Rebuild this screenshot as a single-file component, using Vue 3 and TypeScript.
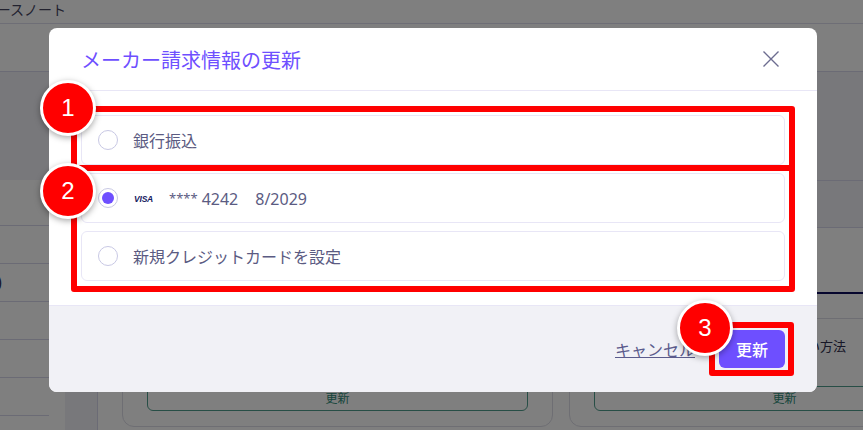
<script setup lang="ts">
import { ref } from 'vue';

interface PayOption {
  id: string;
  label?: string;
  card?: { number: string; last4: string; expiry: string };
}

const options: PayOption[] = [
  { id: 'bank', label: '銀行振込' },
  { id: 'visa', card: { number: '****', last4: '4242', expiry: '8/2029' } },
  { id: 'new', label: '新規クレジットカードを設定' },
];

const selected = ref('visa');
const sideRows = ['', ')', '', '', ''];
</script>

<template>
  <div class="page">
    <div class="topbar">
      <span class="topbar-title">リリースノート</span>
    </div>
    <div class="band"></div>
    <div class="content">
      <aside class="side">
        <div class="side-head"></div>
        <div class="side-row side-first"></div>
        <div v-for="(row, i) in sideRows" :key="i" class="side-row">
          <span class="side-text">{{ row }}</span>
        </div>
      </aside>
      <div class="rail"></div>
      <main class="main">
        <div class="main-head"></div>
        <div class="main-sub"></div>
        <div class="main-tabs"></div>
        <div class="cards">
          <section class="card">
            <div class="card-label"></div>
            <div class="card-btn">更新</div>
          </section>
          <section class="card">
            <div class="card-label">お支払い方法</div>
            <div class="card-btn">更新</div>
          </section>
        </div>
      </main>
    </div>

    <div class="overlay">
      <div class="modal">
        <header class="modal-header">
          <h2 class="modal-title">メーカー請求情報の更新</h2>
          <svg class="close" width="16" height="16" viewBox="0 0 16 16" fill="none">
            <path d="M0.5 0.5L15.5 15.5M15.5 0.5L0.5 15.5" stroke="#6c6c90" stroke-width="1.4" />
          </svg>
        </header>
        <div class="modal-body">
          <div
            v-for="opt in options"
            :key="opt.id"
            class="option"
            @click="selected = opt.id"
          >
            <span class="radio" :class="{ checked: selected === opt.id }"></span>
            <span v-if="opt.label" class="option-text">{{ opt.label }}</span>
            <span v-else-if="opt.card" class="option-card">
              <span class="visa">VISA</span>
              <span class="stars">{{ opt.card.number }}</span>
              <span>{{ opt.card.last4 }}</span>
              <span class="expiry">{{ opt.card.expiry }}</span>
            </span>
          </div>
        </div>
        <footer class="modal-footer">
          <a class="cancel">キャンセル</a>
          <button class="submit" type="button">更新</button>
        </footer>
      </div>
    </div>

    <div class="frame frame-1"></div>
    <div class="frame frame-2"></div>
    <div class="frame frame-3"></div>
    <div class="bubble bubble-1">1</div>
    <div class="bubble bubble-2">2</div>
    <div class="bubble bubble-3">3</div>
  </div>
</template>

<style>
html,
body {
  margin: 0;
  overflow: hidden;
}
</style>

<style scoped>
.page {
  position: relative;
  width: 863px;
  height: 430px;
  overflow: hidden;
  background: #fff;
  color: #2f2f4f;
  font-family: "Noto Sans", "Noto Sans CJK JP", sans-serif;
}

.topbar {
  height: 24px;
  box-sizing: border-box;
  border-bottom: 1px solid #dcdcec;
}

.topbar-title {
  display: flex;
  justify-content: flex-end;
  width: 66px;
  font-size: 14px;
  line-height: 19px;
  white-space: nowrap;
  color: #44445f;
}

.band {
  height: 48px;
  box-sizing: border-box;
  border-bottom: 1px solid #d6d6ea;
}

.content {
  display: flex;
  height: 358px;
}

.side {
  width: 65px;
  flex: none;
}

.side-head {
  height: 108px;
  box-sizing: border-box;
  background: #f1f1f6;
}

.side-row {
  width: 49px;
  height: 38px;
  box-sizing: border-box;
  border-bottom: 1px solid #d6d6ea;
  font-size: 16px;
  line-height: 37px;
}

.side-first {
  height: 46px;
}

.side-text {
  display: block;
  margin-left: -3px;
}

.rail {
  width: 33px;
  flex: none;
  box-sizing: border-box;
  background: #f1f1f6;
  border-right: 1px solid #d6d6ea;
}

.main {
  flex: 1;
  min-width: 0;
}

.main-head {
  height: 109px;
  box-sizing: border-box;
  background: #f1f1f6;
  border-bottom: 1px solid #d6d6ea;
}

.main-sub {
  height: 47px;
  box-sizing: border-box;
  background: #f1f1f6;
  border-bottom: 1px solid #d6d6ea;
}

.main-tabs {
  height: 66px;
  box-sizing: border-box;
  border-bottom: 2px solid #0c0c5c;
}

.cards {
  display: flex;
  gap: 16px;
  padding: 24px 0 0 24px;
  width: 1000px;
}

.card {
  width: 431px;
  height: 109px;
  flex: none;
  box-sizing: border-box;
  padding: 17px 24px;
  border: 1px solid #dcdce6;
  border-radius: 12px;
}

.card-label {
  width: 252px;
  height: 20px;
  margin-bottom: 30px;
  font-size: 13px;
  line-height: 20px;
  text-align: right;
}

.card-btn {
  height: 25px;
  box-sizing: border-box;
  border: 1px solid #4f9c8c;
  border-radius: 6px;
  font-size: 12px;
  line-height: 23px;
  text-align: center;
  color: #2f8c78;
}

.overlay {
  position: absolute;
  inset: 0;
  display: flex;
  align-items: flex-start;
  padding: 28px 0 0 49px;
  background: rgba(0, 0, 0, 0.5);
}

.modal {
  width: 768px;
  background: #fff;
  border-radius: 8px;
  overflow: hidden;
}

.modal-header {
  display: flex;
  align-items: center;
  justify-content: space-between;
  height: 63px;
  box-sizing: border-box;
  padding: 0 38px 0 32px;
  border-bottom: 1px solid #e8e6f6;
}

.modal-title {
  margin: 0;
  font-size: 20px;
  font-weight: 400;
  color: #6e4fff;
}

.close {
  flex: none;
}

.modal-body {
  display: flex;
  flex-direction: column;
  gap: 8px;
  padding: 24px 32px;
}

.option {
  display: flex;
  align-items: center;
  gap: 15px;
  height: 50px;
  box-sizing: border-box;
  padding: 0 16px;
  border: 1px solid #e8e6f6;
  border-radius: 6px;
  color: #5b5b82;
  font-size: 16px;
}

.radio {
  position: relative;
  width: 20px;
  height: 20px;
  flex: none;
  box-sizing: border-box;
  border: 1px solid #c8c8e4;
  border-radius: 50%;
}

.radio.checked::after {
  content: "";
  position: absolute;
  inset: 3px;
  border-radius: 50%;
  background: #6e4fff;
}

.option-card {
  display: flex;
  align-items: center;
  margin-top: 1px;
}

.visa {
  width: 36px;
  padding-left: 1px;
  box-sizing: border-box;
  font-family: "Liberation Sans", sans-serif;
  font-size: 8.5px;
  font-style: italic;
  font-weight: 700;
  letter-spacing: -0.2px;
  color: #16205f;
}

.stars {
  margin-right: 4px;
  margin-bottom: 2px;
  font-size: 13px;
}

.expiry {
  margin-left: 17px;
}

.modal-footer {
  display: flex;
  align-items: center;
  justify-content: flex-end;
  gap: 24px;
  padding: 24px 32px;
  background: #f1f1f6;
  border-top: 1px solid #e8e6f6;
}

.cancel {
  font-size: 16px;
  color: #5b5b8c;
  text-decoration: underline;
}

.submit {
  width: 66px;
  height: 38px;
  padding: 0;
  border: none;
  border-radius: 6px;
  background: #6e4fff;
  color: #fff;
  font-family: inherit;
  font-size: 16px;
  font-weight: 500;
}

.frame {
  position: absolute;
  box-sizing: border-box;
  border: 6px solid #ff0000;
  border-radius: 3px;
}

.frame-1 {
  left: 71px;
  top: 106px;
  width: 724px;
  height: 65px;
}

.frame-2 {
  left: 71px;
  top: 165px;
  width: 724px;
  height: 127px;
}

.frame-3 {
  left: 709px;
  top: 322px;
  width: 85px;
  height: 54px;
}

.bubble {
  position: absolute;
  width: 56px;
  height: 56px;
  box-sizing: border-box;
  border: 3.5px solid #fff;
  border-radius: 50%;
  background: #ff0000;
  box-shadow: 0 2px 6px rgba(0, 0, 0, 0.35);
  color: #fff;
  font-family: "Liberation Sans", sans-serif;
  font-size: 24px;
  line-height: 49px;
  text-align: center;
}

.bubble-1 {
  left: 40px;
  top: 80px;
}

.bubble-2 {
  left: 40px;
  top: 163px;
}

.bubble-3 {
  left: 677px;
  top: 300px;
}
</style>
